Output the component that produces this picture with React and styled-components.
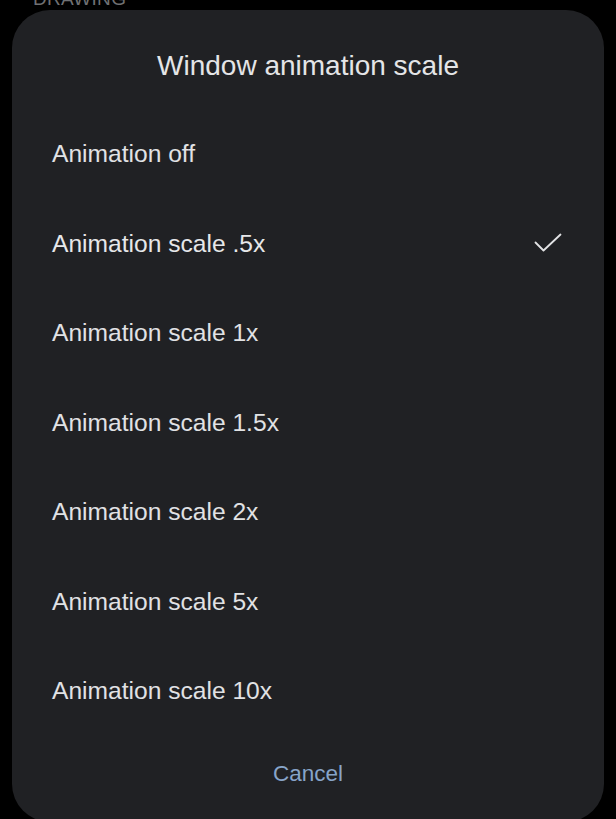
import React from 'react';
import styled, { createGlobalStyle } from 'styled-components';

const GlobalStyle = createGlobalStyle`
  html, body {
    margin: 0;
    padding: 0;
    background: #000;
  }
  body {
    font-family: "Liberation Sans", Arial, sans-serif;
    -webkit-font-smoothing: antialiased;
  }
`;

const Screen = styled.div`
  height: 819px;
  overflow: hidden;
  background: #000;
  display: flex;
  flex-direction: column;
`;

// section header of the settings page behind the dialog, mostly scrolled off
const SectionLabel = styled.div`
  height: 8px;
  overflow: hidden;
  display: flex;
  align-items: flex-end;
  padding-left: 33px;
  color: #6f7073;
  font-size: 19px;
  line-height: 1;
  letter-spacing: 0.3px;
  flex-shrink: 0;
`;

const Dialog = styled.div`
  margin: 2px 12px 0;
  height: 812px;
  flex-shrink: 0;
  background: #202124;
  border-radius: 38px;
  display: flex;
  flex-direction: column;
  padding-top: 36px;
  box-sizing: border-box;
`;

const Title = styled.h1`
  margin: 0;
  text-align: center;
  font-weight: 400;
  font-size: 28px;
  line-height: 40px;
  color: #e4e5e7;
`;

const OptionList = styled.ul`
  list-style: none;
  margin: 23px 0 0;
  padding: 0;
`;

const Option = styled.li`
  height: 89.5px;
  display: flex;
  align-items: center;
  justify-content: space-between;
  padding: 0 42px 0 40px;
  font-size: 24.6px;
  line-height: 1.2;
  color: ${(p) => (p.$selected ? '#e6e7e9' : '#e1e2e4')};
  cursor: pointer;
`;

const Check = styled.svg`
  width: 28px;
  height: 20px;
  flex-shrink: 0;
`;

const Actions = styled.div`
  display: flex;
  justify-content: center;
  margin-top: 23px;
`;

const TextButton = styled.button`
  background: none;
  border: none;
  padding: 0;
  font-family: inherit;
  font-size: 22.5px;
  line-height: 30px;
  color: #87a4c8;
  cursor: pointer;
`;

const options = [
  'Animation off',
  'Animation scale .5x',
  'Animation scale 1x',
  'Animation scale 1.5x',
  'Animation scale 2x',
  'Animation scale 5x',
  'Animation scale 10x',
];

export default function App() {
  const selected = 1;
  return (
    <Screen>
      <GlobalStyle />
      <SectionLabel>DRAWING</SectionLabel>
      <Dialog>
        <Title>Window animation scale</Title>
        <OptionList>
          {options.map((label, i) => (
            <Option key={label} $selected={i === selected}>
              <span>{label}</span>
              {i === selected && (
                <Check viewBox="0 0 28 20">
                  <polyline
                    points="1.5,9.5 9.5,17.5 26.5,1.5"
                    fill="none"
                    stroke="#e2e3e5"
                    strokeWidth="1.8"
                    strokeLinecap="round"
                    strokeLinejoin="round"
                  />
                </Check>
              )}
            </Option>
          ))}
        </OptionList>
        <Actions>
          <TextButton>Cancel</TextButton>
        </Actions>
      </Dialog>
    </Screen>
  );
}
